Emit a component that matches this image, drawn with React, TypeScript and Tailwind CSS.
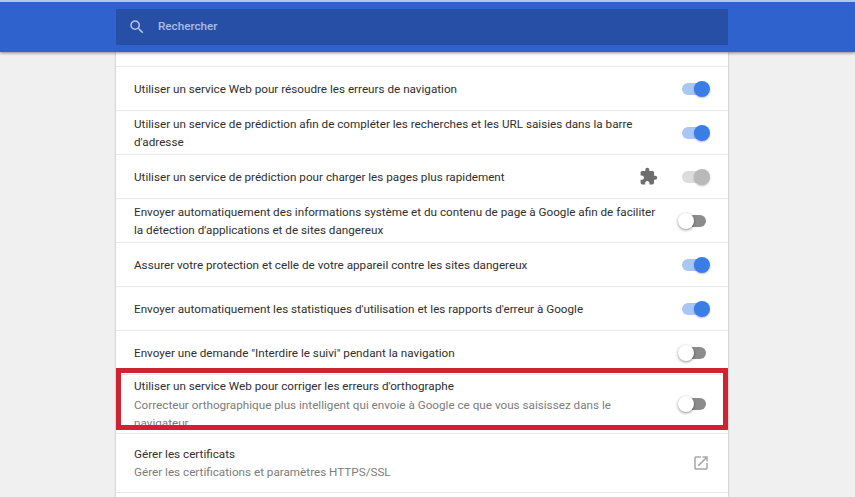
const Toggle = ({ state }: { state: "on" | "off" | "disabled" }) => {
  if (state === "off") {
    return (
      <div className="relative h-[12px] w-[24px] rounded-full bg-[#8c8c8c]">
        <div className="absolute left-[-4px] top-[-2px] h-[16px] w-[16px] rounded-full bg-white shadow-[0_1px_3px_rgba(0,0,0,0.45)]" />
      </div>
    );
  }
  const track = state === "on" ? "bg-[#a9c6f5]" : "bg-[#dcdcdc]";
  const knob = state === "on" ? "bg-[#3b7de6]" : "bg-[#b9b9b9]";
  return (
    <div className={`relative h-[12px] w-[24px] rounded-full ${track}`}>
      <div className={`absolute right-[-4px] top-[-2px] h-[16px] w-[16px] rounded-full ${knob} shadow-[0_1px_2px_rgba(0,0,0,0.25)]`} />
    </div>
  );
};

const Row = ({ lines, state }: { lines: string[]; state: "on" | "off" }) => (
  <div className="flex h-[44px] shrink-0 items-center justify-between border-b border-[#e8e8e8] pl-[18px] pr-[22px]">
    <div className="w-[520px] text-[11.7px] leading-[18px] text-[#2f2f2f]">
      {lines.map((line) => (
        <div key={line} className="whitespace-nowrap">
          {line}
        </div>
      ))}
    </div>
    <Toggle state={state} />
  </div>
);

const App = () => {
  return (
    <div className="relative h-[497px] w-[855px] overflow-hidden bg-[#f0f0f1] font-['Roboto',sans-serif]">
      <header className="relative z-10 h-[52px] border-t-2 border-[#b9c6e2] bg-[#2f62cc] pl-[116px] pt-[7px] shadow-[0_1px_3px_rgba(0,0,0,0.45)]">
        <div className="flex h-[36px] w-[612px] items-center bg-[#274fa6] pl-[12px]">
          <svg width="18" height="18" viewBox="0 0 24 24" fill="#b4c6ea">
            <path d="M15.5 14h-.79l-.28-.27A6.47 6.47 0 0 0 16 9.5 6.5 6.5 0 1 0 9.5 16c1.61 0 3.09-.59 4.23-1.57l.27.28v.79l5 4.99L20.49 19l-4.99-5zm-6 0C7.01 14 5 11.99 5 9.5S7.01 5 9.5 5 14 7.01 14 9.5 11.99 14 9.5 14z" />
          </svg>
          <span className="ml-[12px] text-[11.7px] font-medium text-[#a9bde8]">Rechercher</span>
        </div>
      </header>

      <main className="ml-[116px] flex h-[445px] w-[612px] flex-col bg-white shadow-[0_0_2px_rgba(0,0,0,0.3)]">
        <div className="h-[15px] shrink-0 border-b border-[#e8e8e8]" />
        <Row lines={["Utiliser un service Web pour résoudre les erreurs de navigation"]} state="on" />
        <Row
          lines={[
            "Utiliser un service de prédiction afin de compléter les recherches et les URL saisies dans la barre",
            "d'adresse",
          ]}
          state="on"
        />
        <div className="flex h-[44px] shrink-0 items-center justify-between border-b border-[#e8e8e8] pl-[18px] pr-[22px]">
          <div className="whitespace-nowrap text-[11.7px] leading-[18px] text-[#2f2f2f]">
            Utiliser un service de prédiction pour charger les pages plus rapidement
          </div>
          <div className="flex items-center gap-[24px]">
            <svg width="19" height="19" viewBox="0 0 24 24" fill="#6e6e6e">
              <path d="M20.5 11H19V7c0-1.1-.9-2-2-2h-4V3.5C13 2.12 11.88 1 10.5 1S8 2.12 8 3.5V5H4c-1.1 0-1.99.9-1.99 2v3.8H3.5c1.49 0 2.7 1.21 2.7 2.7s-1.21 2.7-2.7 2.7H2V20c0 1.1.9 2 2 2h3.8v-1.5c0-1.49 1.21-2.7 2.7-2.7 1.49 0 2.7 1.21 2.7 2.7V22H17c1.1 0 2-.9 2-2v-4h1.5c1.38 0 2.5-1.12 2.5-2.5S21.88 11 20.5 11z" />
            </svg>
            <Toggle state="disabled" />
          </div>
        </div>
        <Row
          lines={[
            "Envoyer automatiquement des informations système et du contenu de page à Google afin de faciliter",
            "la détection d'applications et de sites dangereux",
          ]}
          state="off"
        />
        <Row lines={["Assurer votre protection et celle de votre appareil contre les sites dangereux"]} state="on" />
        <Row lines={["Envoyer automatiquement les statistiques d'utilisation et les rapports d'erreur à Google"]} state="on" />
        <Row lines={['Envoyer une demande "Interdire le suivi" pendant la navigation']} state="off" />

        <div className="flex h-[59px] shrink-0 justify-between overflow-hidden border-b border-[#e8e8e8] pl-[18px] pr-[22px]">
          <div className="pt-[2px] text-[11.7px] leading-[18.5px]">
            <div className="whitespace-nowrap text-[#2f2f2f]">Utiliser un service Web pour corriger les erreurs d'orthographe</div>
            <div className="whitespace-nowrap text-[#7c7c7c]">
              Correcteur orthographique plus intelligent qui envoie à Google ce que vous saisissez dans le
            </div>
            <div className="whitespace-nowrap text-[#7c7c7c]">navigateur</div>
          </div>
          <div className="mt-[23px]">
            <Toggle state="off" />
          </div>
        </div>

        <div className="flex h-[59px] shrink-0 items-center justify-between border-b border-[#e8e8e8] pl-[18px] pr-[18px]">
          <div className="text-[11.7px] leading-[18px]">
            <div className="whitespace-nowrap text-[#2f2f2f]">Gérer les certificats</div>
            <div className="whitespace-nowrap text-[#7c7c7c]">Gérer les certifications et paramètres HTTPS/SSL</div>
          </div>
          <svg width="18" height="18" viewBox="0 0 24 24" fill="#a6a6a6">
            <path d="M19 19H5V5h7V3H5a2 2 0 0 0-2 2v14a2 2 0 0 0 2 2h14c1.1 0 2-.9 2-2v-7h-2v7zM14 3v2h3.59l-9.83 9.83 1.41 1.41L19 6.41V10h2V3h-7z" />
          </svg>
        </div>
      </main>

      <div className="pointer-events-none absolute left-[116px] top-[368px] h-[62px] w-[612px] border-[5px] border-[#cf2331]" />
    </div>
  );
};

export default App;
